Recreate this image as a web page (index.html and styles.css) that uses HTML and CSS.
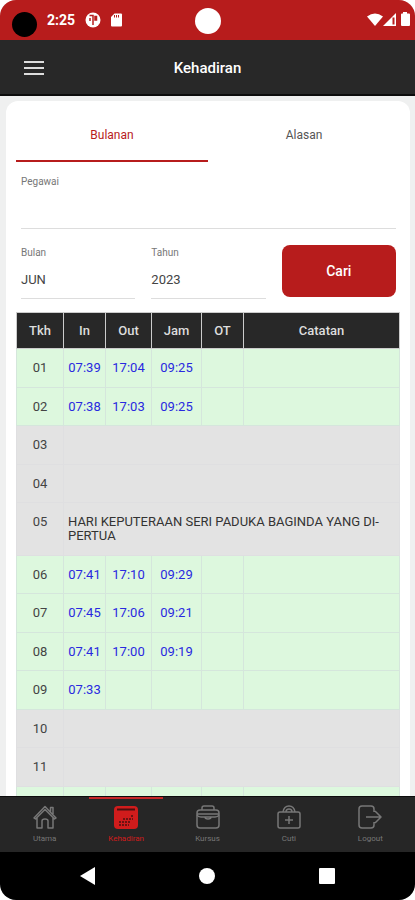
FILE: index.html
```html
<!DOCTYPE html>
<html lang="ms">
<head>
  <meta charset="UTF-8"/>
  <meta name="viewport" content="width=device-width, initial-scale=1.0"/>
  <title>Kehadiran</title>
  <link rel="stylesheet" href="styles.css">
</head>
<body>
  <div class="screen">
    <div class="status-bar">
      <div class="status-left">
        <span class="lens"></span>
        <span class="clock">2:25</span>
        <svg class="status-icon" viewBox="0 0 16 16">
          <circle cx="8" cy="8" r="7.5" fill="#fff"/>
          <path d="M4.500 3.500H8V13M5 6v3M10 4.500h1.500V8H10z" fill="none" stroke="#b71c1c" stroke-width="1.500"/>
        </svg>
        <svg class="status-icon" viewBox="0 0 16 16">
          <path d="M6.500 1.500H13q1 0 1 1v11q0 1-1 1H4q-1 0-1-1V5z" fill="#fff"/>
          <path d="M6.500 3v2.500M8.500 3v2.500M10.500 3v2.500" stroke="#b71c1c"/>
        </svg>
      </div>
      <span class="camera"></span>
      <div class="status-right">
        <svg width="16" height="16" viewBox="0 0 16 16"><path d="M0 4.500Q8-1.500 16 4.500L8 14z" fill="#fff"/></svg>
        <svg width="14" height="16" viewBox="0 0 14 16">
          <path d="M0 14L13 1v13z" fill="#fff"/>
          <path d="M10.500 5.500v7" stroke="#b71c1c" stroke-width="2"/>
        </svg>
        <svg width="16" height="16" viewBox="0 0 16 16"><path d="M6 0h4v1.500h2q1 0 1 1V13q0 1-1 1H5q-1 0-1-1V2.500q0-1 1-1h1z" fill="#fff"/></svg>
      </div>
    </div>

    <header class="app-bar">
      <button class="menu-btn" aria-label="Menu"><span></span><span></span><span></span></button>
      <h1>Kehadiran</h1>
    </header>

    <main>
      <div class="card">
        <div class="tabs">
          <button class="tab active">Bulanan</button>
          <button class="tab">Alasan</button>
        </div>

        <form class="filter">
          <div class="field field-full">
            <label for="pegawai">Pegawai</label>
            <input type="text" id="pegawai">
          </div>
          <div class="field">
            <label for="bulan">Bulan</label>
            <select id="bulan"><option>JUN</option></select>
          </div>
          <div class="field">
            <label for="tahun">Tahun</label>
            <select id="tahun"><option>2023</option></select>
          </div>
          <button type="button" class="btn-cari">Cari</button>
        </form>

        <table>
          <colgroup>
            <col class="c-tkh"><col class="c-in"><col class="c-out"><col class="c-jam"><col class="c-ot"><col>
          </colgroup>
          <thead>
            <tr><th>Tkh</th><th>In</th><th>Out</th><th>Jam</th><th>OT</th><th>Catatan</th></tr>
          </thead>
          <tbody>
            <tr><td>01</td><td>07:39</td><td>17:04</td><td>09:25</td><td></td><td></td></tr>
            <tr><td>02</td><td>07:38</td><td>17:03</td><td>09:25</td><td></td><td></td></tr>
            <tr class="off"><td>03</td><td colspan="5"></td></tr>
            <tr class="off"><td>04</td><td colspan="5"></td></tr>
            <tr class="off holiday"><td>05</td><td colspan="5">HARI KEPUTERAAN SERI PADUKA BAGINDA YANG DI-PERTUA</td></tr>
            <tr><td>06</td><td>07:41</td><td>17:10</td><td>09:29</td><td></td><td></td></tr>
            <tr><td>07</td><td>07:45</td><td>17:06</td><td>09:21</td><td></td><td></td></tr>
            <tr><td>08</td><td>07:41</td><td>17:00</td><td>09:19</td><td></td><td></td></tr>
            <tr><td>09</td><td>07:33</td><td></td><td></td><td></td><td></td></tr>
            <tr class="off"><td>10</td><td colspan="5"></td></tr>
            <tr class="off"><td>11</td><td colspan="5"></td></tr>
            <tr><td></td><td></td><td></td><td></td><td></td><td></td></tr>
          </tbody>
        </table>
      </div>
    </main>

    <nav class="bottom-nav">
      <a href="#utama">
        <svg viewBox="0 0 24 24"><path d="M1 13L12 1.500 23 13l-1.500 1L12 4.500 2.500 14zM4 13v10h5v-7q0-2 3-2t3 2v7h5V13M17.500 6.500V2.500H20V9"/></svg>
        Utama
      </a>
      <a href="#kehadiran" class="active">
        <svg viewBox="0 0 24 24">
          <rect class="solid" x="0" y="1" width="24" height="23" rx="4"/>
          <path class="dark" d="M3 4.500h18"/>
          <path class="dots" d="M9 14h10M5 17h12M5 20h10M17 11h3"/>
        </svg>
        Kehadiran
      </a>
      <a href="#kursus">
        <svg viewBox="0 0 24 24"><rect x="1" y="5" width="22" height="18" rx="3"/><path d="M6 5V3q0-2 2-2h8q2 0 2 2v2M1 9h22M1 10q1 2 4 2h4M15 12h4q3 0 4-2M9 12q0 2 3 2t3-2z"/></svg>
        Kursus
      </a>
      <a href="#cuti">
        <svg viewBox="0 0 24 24"><rect x="1" y="7" width="22" height="16" rx="2"/><path d="M6 7q1-6 6-6t6 6M9 7q0-3 3-3t3 3M12 11v8M8 15h8"/></svg>
        Cuti
      </a>
      <a href="#logout">
        <svg viewBox="0 0 24 24"><path d="M16 7V4q0-3-3-3H4Q1 1 1 4v16q0 3 3 3h9q3 0 3-3v-3M8 12h15M17 6l6 6-6 6"/></svg>
        Logout
      </a>
    </nav>

    <div class="system-nav">
      <button aria-label="Back"><svg viewBox="0 0 18 18"><path d="M16 0v18L1 9z"/></svg></button>
      <button aria-label="Home"><svg viewBox="0 0 18 18"><circle cx="9" cy="9" r="8"/></svg></button>
      <button aria-label="Recent"><svg viewBox="0 0 18 18"><rect x="1" y="1" width="16" height="16" rx="1"/></svg></button>
    </div>
  </div>
</body>
</html>
```
FILE: styles.css
```css
* { box-sizing: border-box; }
body {
  margin: 0;
  background: #fff; color: #444;
  font-family: Roboto, sans-serif;
  font-size: 13px;
}
button, input, select {
  font-family: inherit; font-size: inherit; color: inherit;
  border: none; background: none; padding: 0; margin: 0;
}
button { cursor: pointer; }
.screen {
  display: flex; flex-direction: column;
  height: 100vh;
  background: #eff0f0;
  border-radius: 16px;
  overflow: hidden;
}

/* phone status bar */
.status-bar {
  flex: 0 0 40px;
  display: grid; grid-template-columns: 1fr auto 1fr;
  align-items: center;
  padding: 0 4px 0 12px;
  background: #b71c1c; color: #fff;
}
.status-left, .status-right {
  display: flex; align-items: center;
}
.status-left { gap: 10px; }
.status-right { justify-content: flex-end; }
.lens {
  width: 25px; height: 25px;
  margin-top: 8px;
  border-radius: 50%; background: #000;
}
.clock {
  font-size: 14px; font-weight: 700;
}
.status-icon { width: 16px; height: 16px; }
.status-right { margin-right: -2px; }
.status-icon + .status-icon { margin-left: -3px; }
.camera {
  width: 26px; height: 26px;
  margin: 2px 8px 0 0;
  border-radius: 50%; background: #fff;
}

.app-bar {
  flex: 0 0 56px;
  display: grid; grid-template-columns: 24px 1fr 24px;
  align-items: center;
  padding: 0 22px;
  background: #282828; color: #fff;
  border-bottom: 2px solid #0c0c0c;
}
.app-bar h1 {
  margin: 2px 0 0;
  font-size: 15px; font-weight: 500;
  text-align: center;
}
.menu-btn {
  display: flex; flex-direction: column; gap: 4px;
  width: 24px; padding: 3px 2px 1px;
}
.menu-btn span {
  height: 2px; background: #ddd;
}

main {
  flex: 1 1 0; min-height: 0;
  overflow-y: auto;
  scrollbar-width: none;
  padding: 5px 5px 0 6px;
}
.card {
  background: #fff;
  border-radius: 12px;
  padding: 9px 10px;
}
.tabs { display: flex; }
.tab {
  flex: 1;
  height: 52px;
  font-size: 12px;
  color: #555;
  border-bottom: 2px solid transparent;
}
.tab.active {
  color: #b71c1c;
  border-bottom-color: #b71c1c;
}

.filter {
  display: grid; grid-template-columns: 1fr 1fr 1fr;
  align-items: start;
  column-gap: 16px; row-gap: 16px;
  padding: 12px 4px 13px 5px;
}
.field {
  display: flex; flex-direction: column;
  border-bottom: 1px solid #ddd;
}
.field-full { grid-column: 1 / -1; }
.field label {
  font-size: 10px; line-height: 16px;
  color: #777;
}
.field input { height: 38px; }
.field select {
  appearance: none;
  height: 37px;
}
.btn-cari {
  height: 52px;
  background: #b71c1c; color: #fff;
  border-radius: 8px;
  font-size: 14px; font-weight: 500;
}

table {
  width: 100%;
  table-layout: fixed;
  border-collapse: collapse;
}
.c-tkh { width: 47px; }
.c-in  { width: 42px; }
.c-out { width: 46px; }
.c-jam { width: 50px; }
.c-ot  { width: 42px; }
th {
  height: 36px; padding: 0;
  background: #282828; color: #ddd;
  border: 1px solid #ccc;
  font-weight: 500;
}
td {
  padding: 0;
  line-height: 14px;
  text-align: center;
  color: #2929e0;
  background: #ddf8de;
  border: 1px solid #d5e6dc;
}
td:first-child { color: #444; }
tbody tr { height: 39px; }
tbody tr:nth-child(even) { height: 38px; }
.off td {
  background: #e3e3e3; color: #333;
  border-color: #dfdfe1;
  text-align: left;
}
.off td:first-child { text-align: center; color: #444; }
.holiday td {
  padding: 12px 4px;
  vertical-align: top;
}

.bottom-nav {
  flex: 0 0 56px;
  display: flex;
  padding: 0 4px;
  background: #262626;
  border-top: 1px solid #0c0c0c;
}
.bottom-nav a {
  flex: 1;
  display: flex; flex-direction: column; align-items: center;
  gap: 5px;
  margin: 0 4px; padding-top: 6px;
  border-top: 2px solid transparent;
  color: #777;
  font-size: 8px; line-height: 10px;
  text-decoration: none;
}
.bottom-nav a.active {
  color: #d01c1c;
  border-top-color: #c62828;
}
.bottom-nav svg {
  width: 24px; height: 24px;
  fill: none; stroke: currentColor; stroke-width: 1.5;
  stroke-linejoin: round;
}
.bottom-nav .solid { fill: currentColor; stroke: none; }
.bottom-nav .dark { stroke: #4a1010; stroke-width: 2; }
.bottom-nav .dots { stroke: #6d1212; stroke-width: 2; stroke-dasharray: 2 1; }

.system-nav {
  flex: 0 0 48px;
  display: flex; align-items: center; justify-content: space-around;
  padding: 0 28px;
  background: #000;
}
.system-nav button { display: flex; }
.system-nav svg { width: 18px; height: 18px; fill: #fff; }
```
